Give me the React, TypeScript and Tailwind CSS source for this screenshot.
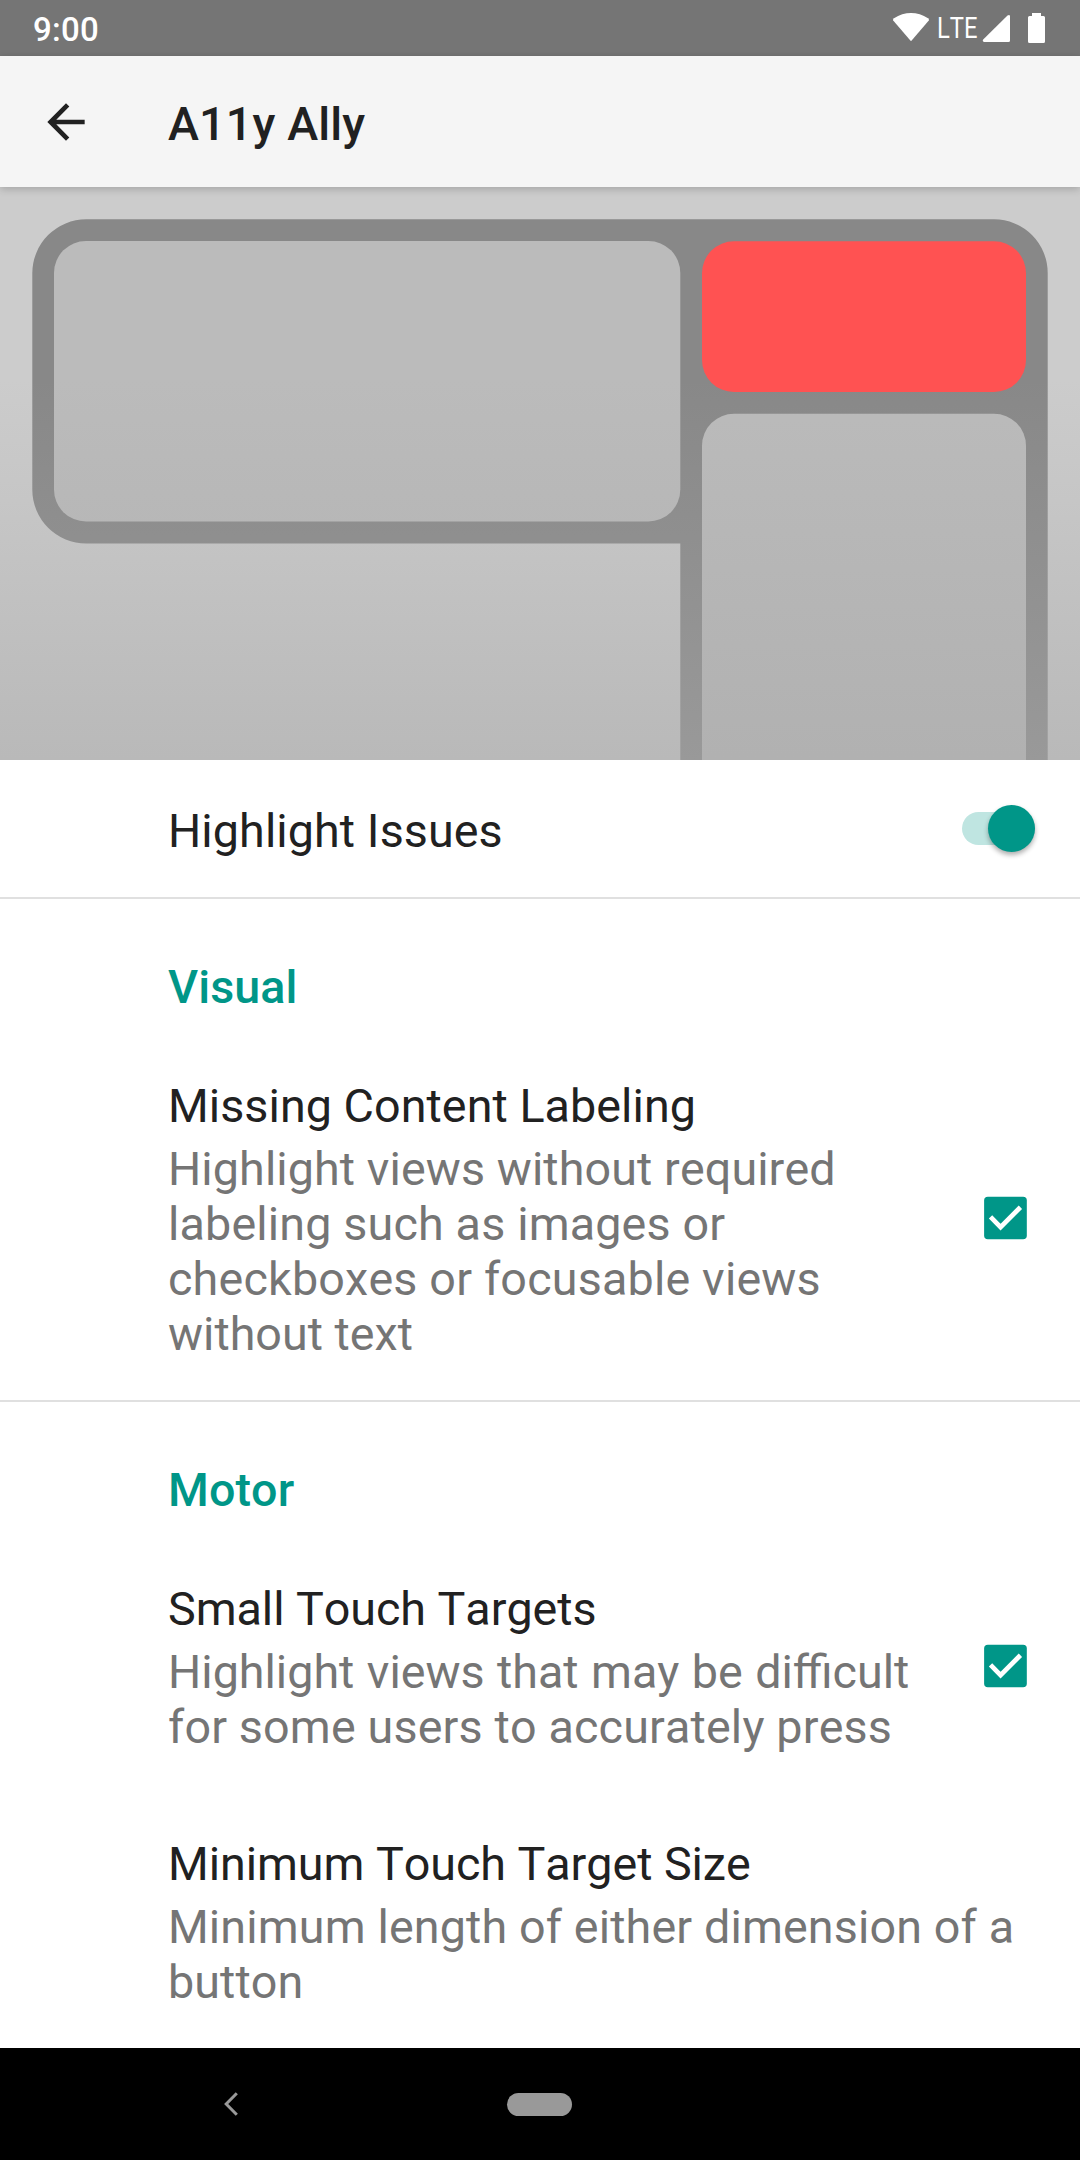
import React from "react";

function StatusBar() {
  return (
    <div className="flex h-14 items-center justify-between bg-[#757575] pl-[33px] text-white">
      <span className="pt-[3px] text-[33px] leading-[38px] font-medium tracking-[0.3px]">9:00</span>
      <svg width="220" height="56" viewBox="0 0 220 56" fill="#fff">
        <path d="M51 41.2 33.2 20.6Q32.6 19.2 34 18.2C44.5 11.1 57.500 11.100 68 18.200Q69.400 19.200 68.800 20.600Z" />
        <text x="77" y="38" fontSize="29" textLength="40.500" lengthAdjust="spacingAndGlyphs">LTE</text>
        <path d="M150 16V40.500Q150 42 148.500 42H124Q122 41.500 123.200 39.600L147.500 15.600Q149.600 14.200 150 16Z" />
        <path d="M172 13h9v3h2.500q1.500 0 1.500 1.500v24q0 1.500-1.500 1.500h-14q-1.500 0-1.500-1.500v-24q0-1.500 1.500-1.500h2.500z" />
      </svg>
    </div>
  );
}

function AppBar() {
  return (
    <header className="relative z-10 flex h-[131px] items-center bg-[#f5f5f5] shadow-[0_2px_8px_rgba(0,0,0,0.2)]">
      <svg className="ml-[38.300px] mb-[9px] mt-[9px]" width="56" height="56" viewBox="0 0 24 24" fill="#212121">
        <path d="M20 11H7.830l5.590-5.590L12 4l-8 8 8 8 1.410-1.410L7.830 13H20v-2z" />
      </svg>
      <h1 className="ml-[73.700px] mt-[5px] text-[46.670px] leading-[55px] font-medium tracking-[0.15px]">A11y Ally</h1>
    </header>
  );
}

function Preview() {
  return (
    <svg className="block" width="1080" height="573" viewBox="0 187 1080 573">
      <defs>
        <linearGradient id="fade" gradientUnits="userSpaceOnUse" x1="0" y1="380" x2="0" y2="760">
          <stop offset="0" stopColor="#a8a8a8" stopOpacity="0" />
          <stop offset="1" stopColor="#a8a8a8" stopOpacity="0.53" />
        </linearGradient>
      </defs>
      <rect y="187" width="1080" height="573" fill="#cccccc" />
      <path
        fill="#888888"
        d="M86.300 219.300H994A53.700 53.700 0 0 1 1047.700 273V760H680.300V543.500H86.300A54 54 0 0 1 32.300 489.500V273.300A54 54 0 0 1 86.300 219.300Z"
      />
      <rect x="54" y="241" width="626.300" height="280.500" rx="32" fill="#bbbbbb" />
      <rect x="702" y="413.700" width="324" height="400" rx="32" fill="#bbbbbb" />
      <rect y="380" width="1080" height="380" fill="url(#fade)" />
      <rect x="702" y="241.200" width="324" height="150.800" rx="32" fill="#ff5252" />
    </svg>
  );
}

function Checkbox() {
  return (
    <svg className="mr-[47px] mb-[6px] shrink-0" width="56" height="56" viewBox="0 0 24 24">
      <rect x="3.050" y="2.850" width="18.300" height="18.300" rx="1.600" fill="#009688" />
      <path d="M5.800 11.500l4.300 4.400 8.500-8.500" fill="none" stroke="#fff" strokeWidth="2" />
    </svg>
  );
}

function Category({ children }: { children: React.ReactNode }) {
  return (
    <h2 className="ml-[168px] text-[46.670px] leading-[55px] font-medium tracking-[0.1px] text-[#009688]">{children}</h2>
  );
}

type Line = { text: string; spacing: string };

function Preference({ title, lines, checked }: { title: Line; lines: Line[]; checked?: boolean }) {
  return (
    <div className="flex items-center justify-between pl-[168px]">
      <div>
        <h3 className={`mb-2 text-[46.670px] leading-[55px] ${title.spacing}`}>{title.text}</h3>
        {lines.map((line) => (
          <p
            key={line.text}
            className={`text-[46.670px] leading-[55px] whitespace-nowrap text-[#757575] ${line.spacing}`}
          >
            {line.text}
          </p>
        ))}
      </div>
      {checked && <Checkbox />}
    </div>
  );
}

export default function App() {
  return (
    <div className="flex h-[2160px] w-[1080px] flex-col overflow-hidden bg-white font-['Roboto',sans-serif] text-[#212121] [font-kerning:none]">
      <StatusBar />
      <AppBar />
      <Preview />
      <main className="flex h-[1288px] flex-col">
        <section className="flex h-[139px] items-center justify-between border-b-2 border-[#e0e0e0] pl-[168px]">
          <span className="mt-[6px] text-[46.670px] leading-[55px] tracking-[0.09px]">Highlight Issues</span>
          <div className="mr-[45px] flex h-[33px] w-[73px] items-center justify-end rounded-full bg-[#bfe5e1]">
            <div className="h-[47px] w-[47px] shrink-0 rounded-full bg-[#009688] shadow-[0_3px_5px_rgba(0,0,0,0.32)]" />
          </div>
        </section>
        <section className="flex h-[503px] flex-col gap-[64px] border-b-2 border-[#e0e0e0] pt-[61px]">
          <Category>Visual</Category>
          <Preference
            checked
            title={{ text: "Missing Content Labeling", spacing: "tracking-[0.06px]" }}
            lines={[
              { text: "Highlight views without required", spacing: "tracking-[0.09px]" },
              { text: "labeling such as images or", spacing: "tracking-[0.16px]" },
              { text: "checkboxes or focusable views", spacing: "tracking-[0.19px]" },
              { text: "without text", spacing: "tracking-normal" },
            ]}
          />
        </section>
        <section className="flex flex-col pt-[61px]">
          <Category>Motor</Category>
          <div className="mt-16 flex flex-col gap-[82px]">
            <Preference
              checked
              title={{ text: "Small Touch Targets", spacing: "tracking-[-0.05px]" }}
              lines={[
                { text: "Highlight views that may be difficult", spacing: "[word-spacing:0.83px]" },
                { text: "for some users to accurately press", spacing: "tracking-[0.16px]" },
              ]}
            />
            <Preference
              title={{ text: "Minimum Touch Target Size", spacing: "tracking-[-0.05px]" }}
              lines={[
                { text: "Minimum length of either dimension of a", spacing: "tracking-[0.14px]" },
                { text: "button", spacing: "tracking-[0.1px]" },
              ]}
            />
          </div>
        </section>
      </main>
      <nav className="flex h-28 shrink-0 items-center bg-black pl-[224px]">
        <svg width="14" height="24" viewBox="0 0 14 24" fill="none" stroke="#999" strokeWidth="3">
          <path d="M12.800 1.200L2.200 12l10.600 10.800" />
        </svg>
        <div className="ml-[269px] h-[23px] w-[65px] rounded-full bg-[#999]" />
      </nav>
    </div>
  );
}
